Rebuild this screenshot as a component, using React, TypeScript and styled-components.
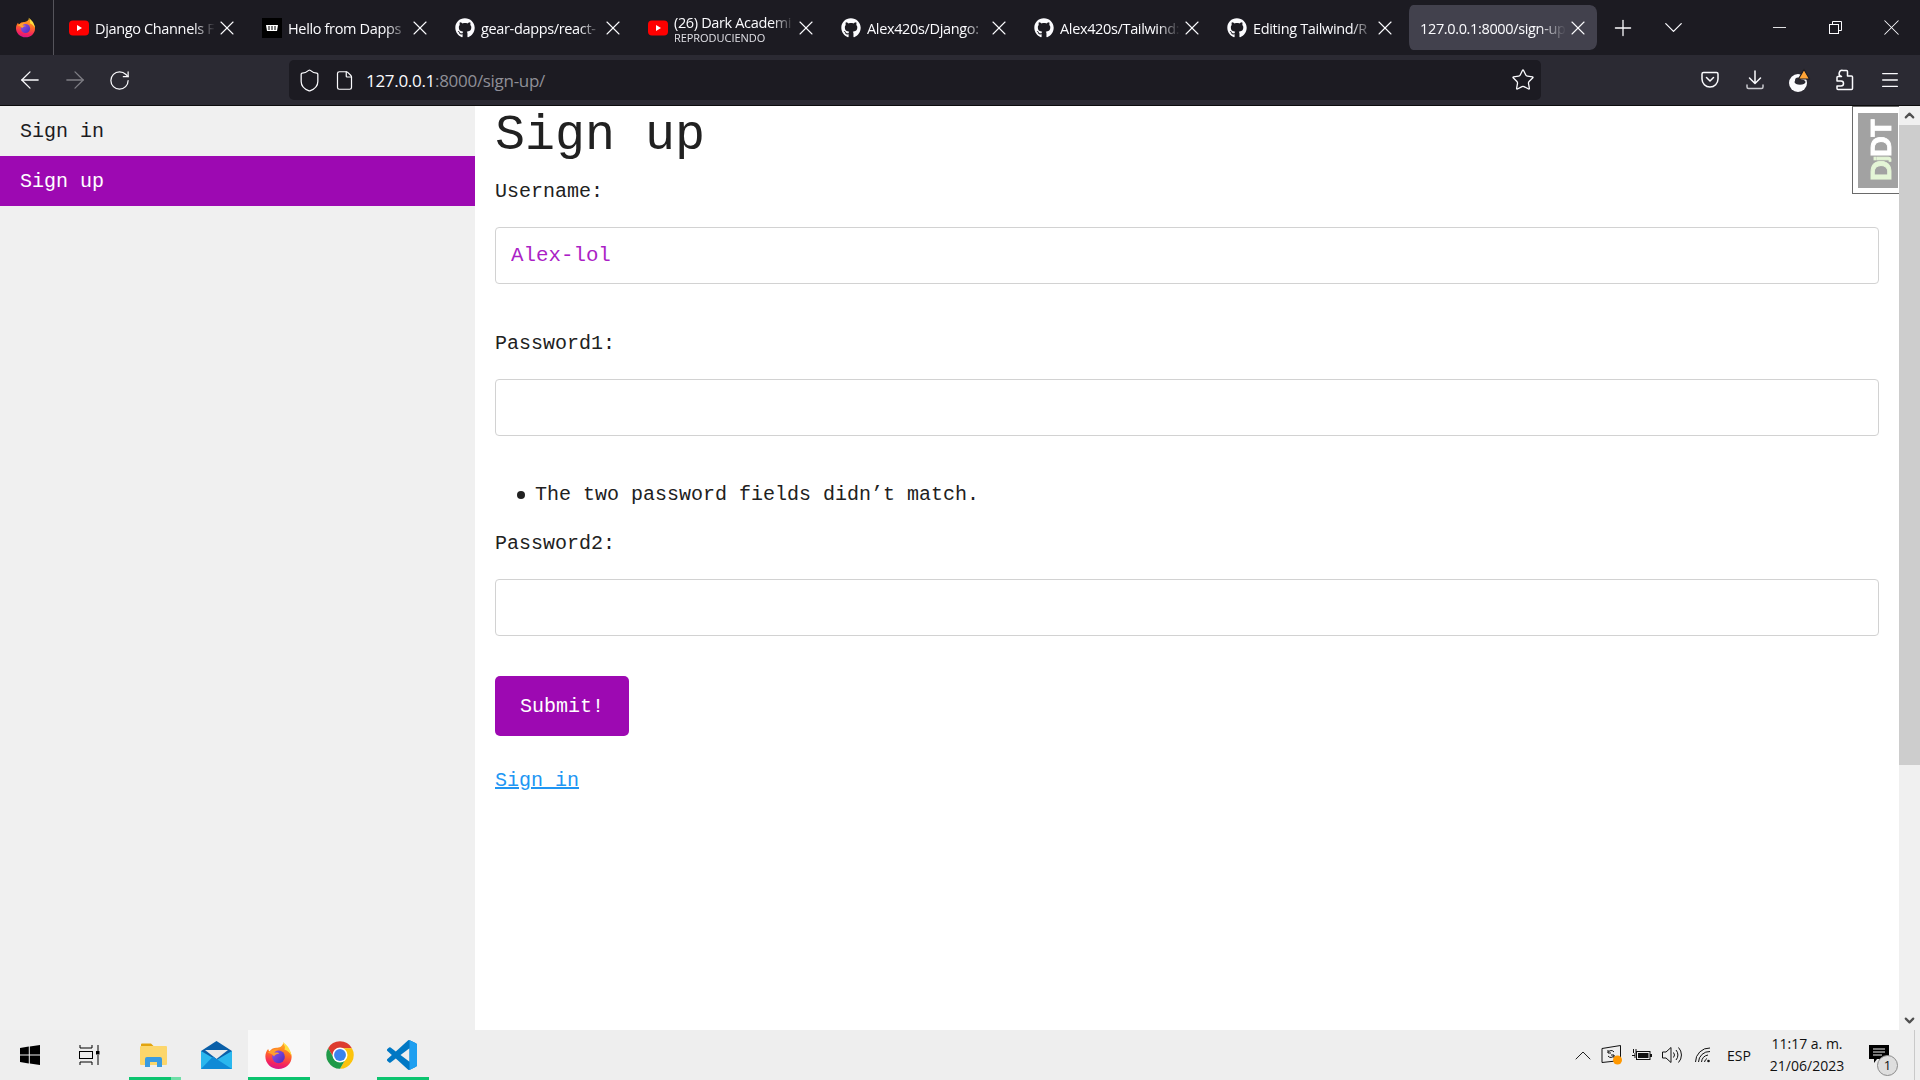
import * as React from "react";
import styled, { createGlobalStyle } from "styled-components";
import { FaGithub } from "react-icons/fa";
import {
  ArrowLeft,
  ArrowRight,
  ChevronDown,
  ChevronUp,
  File,
  Menu,
  Minus,
  Plus,
  RotateCw,
  Shield,
  Star,
  X,
} from "lucide-react";

const GlobalStyle = createGlobalStyle`
  html, body {
    margin: 0;
    padding: 0;
    height: 100%;
    overflow: hidden;
  }
  * {
    box-sizing: border-box;
  }
`;

const UI_FONT = `"Open Sans", "Noto Sans", sans-serif`;
const MONO_FONT = `"Liberation Mono", monospace`;

const Screen = styled.div`
  width: 1920px;
  height: 1080px;
  display: flex;
  flex-direction: column;
  overflow: hidden;
  background: #fff;
`;

/* browser chrome */

const TabStrip = styled.div`
  height: 55px;
  display: flex;
  align-items: stretch;
  background: #1c1b22;
  color: #fbfbfe;
  font-family: ${UI_FONT};
`;

const FirefoxMenu = styled.div`
  width: 54px;
  border-right: 1px solid #55545b;
  display: flex;
  align-items: center;
  justify-content: center;
  padding: 0 3px 1px 0;
`;

const Tab = styled.div<{ $active?: boolean }>`
  width: 193px;
  height: 45px;
  margin-top: 5px;
  padding-left: 11px;
  border: 0 solid transparent;
  border-width: 0 1px 0 4px;
  border-radius: 8px;
  background: ${(p) => (p.$active ? "#42414d" : "transparent")};
  background-clip: padding-box;
  display: flex;
  align-items: center;
  gap: 6px;
`;

const Favicon = styled.span`
  width: 20px;
  height: 20px;
  flex: none;
  display: flex;
  align-items: center;
  justify-content: center;
`;

const TabLabel = styled.div`
  flex: 1;
  min-width: 0;
  overflow: hidden;
  white-space: nowrap;
  mask-image: linear-gradient(to right, #000 82%, transparent 100%);
`;

const TabTitle = styled.div`
  font-size: 14.5px;
  line-height: 18px;
  letter-spacing: -0.35px;
  padding-top: 2px;
`;

const TabSub = styled.div`
  font-size: 11px;
  line-height: 12px;
  letter-spacing: -0.05px;
  color: #e0e0e6;
`;

const TabClose = styled.span`
  width: 24px;
  flex: none;
  margin: 0 7px 0 -6px;
  display: flex;
  justify-content: center;
`;

const StripButton = styled.div<{ $w: number }>`
  width: ${(p) => p.$w}px;
  display: flex;
  align-items: center;
  justify-content: center;
`;

const WindowControls = styled.div`
  margin-left: auto;
  margin-right: 1px;
  display: flex;
`;

const Toolbar = styled.div`
  height: 50px;
  display: flex;
  align-items: center;
  padding: 0 8px 0 7px;
  background: #2b2a33;
  color: #fbfbfe;
`;

const ToolButton = styled.div<{ $dim?: boolean }>`
  width: 45px;
  height: 40px;
  display: flex;
  align-items: center;
  justify-content: center;
  opacity: ${(p) => (p.$dim ? 0.4 : 1)};
`;

const UrlBar = styled.div`
  flex: 1;
  height: 40px;
  margin: 0 146px 0 147px;
  padding: 0 6px 0 7px;
  display: flex;
  align-items: center;
  background: #1c1b22;
  border-radius: 5px;
`;

const UrlIcon = styled.span<{ $w: number }>`
  width: ${(p) => p.$w}px;
  flex: none;
  display: flex;
  justify-content: center;
`;

const UrlText = styled.div`
  flex: 1;
  padding-top: 1px;
  font-family: ${UI_FONT};
  font-size: 17px;
  letter-spacing: -0.3px;
  color: #fbfbfe;
`;

const UrlRest = styled.span`
  color: #8f8f97;
`;

const ChromeEdge = styled.div`
  height: 1px;
  background: #0c0c0d;
`;

/* page */

const PageArea = styled.div`
  position: relative;
  flex: 1;
  min-height: 0;
  display: flex;
`;

const SideNav = styled.nav`
  width: 475px;
  flex: none;
  background: #f0f0f0;
`;

const SideLink = styled.a<{ $active?: boolean }>`
  display: block;
  height: 50px;
  padding: 0 20px;
  font: 20px/51px ${MONO_FONT};
  color: ${(p) => (p.$active ? "#fff" : "#1c1b22")};
  background: ${(p) => (p.$active ? "#9d09b2" : "transparent")};
`;

const Main = styled.main`
  flex: 1;
  min-width: 0;
  padding: 0 20px;
  font-family: ${MONO_FONT};
  color: #212121;
`;

const Heading = styled.h1`
  margin: 0 0 17px;
  padding-top: 3px;
  font-size: 50px;
  line-height: 54px;
  font-weight: 400;
`;

const FieldLabel = styled.label`
  display: block;
  font-size: 20px;
  line-height: 24px;
`;

const TextInput = styled.input`
  display: block;
  width: 100%;
  height: 57px;
  margin-top: 23px;
  margin-bottom: 48px;
  padding: 0 15px;
  border: 1.5px solid #d2d2d2;
  border-radius: 4px;
  outline: none;
  background: #fff;
  font-family: ${MONO_FONT};
  font-size: 20.8px;
  color: #ab1fc6;
`;

const ErrorList = styled.ul`
  margin: -1px 0 25px;
  padding-left: 40px;
  list-style: none;
  font-size: 20px;
  line-height: 24px;
`;

const ErrorItem = styled.li`
  position: relative;

  &::before {
    content: "";
    position: absolute;
    left: -18px;
    top: 8px;
    width: 8px;
    height: 8px;
    border-radius: 50%;
    background: #212121;
  }
`;

const SubmitButton = styled.button`
  display: block;
  width: 134px;
  height: 60px;
  margin-top: -8px;
  padding: 0;
  border: none;
  border-radius: 5px;
  background: #9d09b2;
  color: #fff;
  font-family: ${MONO_FONT};
  font-size: 20px;
`;

const TextLink = styled.a`
  display: inline-block;
  margin-top: 33px;
  font-size: 20px;
  line-height: 24px;
  color: #2196f3;
  text-decoration: underline;
`;

const ScrollBar = styled.div`
  width: 21px;
  flex: none;
  display: flex;
  flex-direction: column;
  background: #f0f0f0;
  color: #505050;
`;

const ScrollArrow = styled.div`
  height: 19px;
  flex: none;
  display: flex;
  align-items: center;
  justify-content: center;
`;

const ScrollThumb = styled.div`
  height: 640px;
  flex: none;
  background: #cdcdcd;
`;

const ScrollTrack = styled.div`
  flex: 1;
`;

const DebugHandle = styled.div`
  position: absolute;
  top: 0;
  right: 21px;
  width: 47px;
  height: 88px;
  padding: 6px 0 5px 5px;
  background: #fff;
  border: 1px solid #6a6a6a;
  border-right: none;
`;

const DebugBadge = styled.div`
  height: 100%;
  padding-right: 7px;
  background: #a2a2a2;
  display: flex;
  align-items: center;
  justify-content: center;
  writing-mode: vertical-rl;
  transform: rotate(180deg);
  font-family: "Liberation Sans", sans-serif;
  font-weight: 700;
  font-size: 29px;
  letter-spacing: -1px;
  -webkit-text-stroke: 0.8px currentColor;
  color: #fff;
`;

const DebugDj = styled.span`
  color: #e4f5d6;

  & small {
    font-size: 18px;
  }
`;

/* taskbar */

const Taskbar = styled.footer`
  height: 50px;
  display: flex;
  align-items: stretch;
  background: #eeeeee;
  font-family: ${UI_FONT};
  color: #111;
`;

const TaskSlot = styled.div<{ $active?: boolean; $bar?: "full" | "stack"; $nudge?: number }>`
  position: relative;
  width: 62px;
  padding-right: ${(p) => p.$nudge ?? 2}px;
  display: flex;
  align-items: center;
  justify-content: center;
  background: ${(p) => (p.$active ? "#f8f8f8" : "transparent")};

  &::after {
    content: "";
    display: ${(p) => (p.$bar ? "block" : "none")};
    position: absolute;
    bottom: 0;
    left: ${(p) => (p.$active ? 0 : 5)}px;
    right: ${(p) => (p.$active ? 0 : 5)}px;
    height: 3px;
    background: ${(p) =>
      p.$bar === "stack"
        ? "linear-gradient(to right, #0cc46f 80%, #6fdfa8 80%)"
        : "#0cc46f"};
  }
`;

const Tray = styled.div`
  margin-left: auto;
  padding-right: 5px;
  display: flex;
  align-items: center;
`;

const TrayIcon = styled.span<{ $w: number }>`
  width: ${(p) => p.$w}px;
  height: 50px;
  flex: none;
  display: flex;
  align-items: center;
  justify-content: center;
`;

const TrayLang = styled.span`
  width: 40px;
  text-align: center;
  font-size: 14px;
`;

const Clock = styled.div`
  width: 98px;
  padding-right: 2px;
  text-align: center;
  font-size: 14px;
  line-height: 22px;
  white-space: nowrap;
`;

const NoticeWrap = styled.div`
  position: relative;
  width: 58px;
  height: 50px;
  padding: 15px 0 0 12px;
  border-right: 1px solid #c9c9c9;
`;

const NoticeCount = styled.span`
  position: absolute;
  left: 20px;
  top: 25px;
  width: 21px;
  height: 21px;
  border-radius: 50%;
  background: #dedede;
  border: 1.5px solid #8a8a8a;
  font-size: 13px;
  line-height: 18px;
  text-align: center;
`;

/* drawn icons */

const FirefoxIcon: React.FC<{ size: number; id: string }> = ({ size, id }) => (
  <svg width={size} height={size} viewBox="0 0 32 32">
    <defs>
      <linearGradient id={`${id}Body`} x1="0.6" y1="0" x2="0.4" y2="1">
        <stop offset="0" stopColor="#ffb51f" />
        <stop offset="0.45" stopColor="#ff6a26" />
        <stop offset="0.8" stopColor="#f5235f" />
        <stop offset="1" stopColor="#d3158d" />
      </linearGradient>
      <linearGradient id={`${id}Core`} x1="0" y1="0" x2="1" y2="1">
        <stop offset="0" stopColor="#8f55f0" />
        <stop offset="1" stopColor="#4d2ab8" />
      </linearGradient>
    </defs>
    <path
      d="M21 1c.6 3 2.600 4.600 4.600 6.600C28.900 11 30.500 14 30.500 17.500 30.500 25.500 24 31 16 31 8 31 1.500 25 1.500 17.200 1.500 14 2.600 11 4.600 8.800c.2 1.300.8 2.200 1.600 2.800C8 8.500 11 7.500 13.500 7.500 16 7.500 21.800 6 21 1z"
      fill={`url(#${id}Body)`}
    />
    <path
      d="M21 1c2.800 2.500 8.500 6.500 9.500 16-1.800-4-4.500-6.500-8-7.500C24 7 22.500 4 21 1z"
      fill="#ffdf3e"
    />
    <circle cx="16" cy="17.500" r="7" fill={`url(#${id}Core)`} />
    <path
      d="M4 13c2.500-3 8-5 13-3.500-3 .3-5 1.800-5.500 3.800 2-.9 4.400-.6 5.400.7-2.600-.2-4.800.8-5.800 3C9.500 15 7 13.500 4 13z"
      fill="#ffa02e"
    />
  </svg>
);

const YoutubeIcon = () => (
  <svg width="20" height="20" viewBox="0 0 20 20">
    <rect x="0" y="2.500" width="20" height="15" rx="4" fill="#f00" />
    <polygon points="8,7 8,13 13,10" fill="#fff" />
  </svg>
);

const DappsIcon = () => (
  <svg width="20" height="20" viewBox="0 0 20 20">
    <rect width="20" height="20" fill="#000" />
    <path d="M4 7h12l-1 6H5z" fill="#fff" />
    <path d="M7 8v4M10 8v4M13 8v4" stroke="#000" strokeWidth="1" />
  </svg>
);

const RestoreIcon = () => (
  <svg width="13" height="13" viewBox="0 0 13 13" fill="none" stroke="#fbfbfe" strokeWidth="1">
    <rect x="0.500" y="3.500" width="9" height="9" />
    <path d="M3.500 3.500v-3h9v9h-3" />
  </svg>
);

const PocketIcon = () => (
  <svg width="20" height="20" viewBox="0 0 20 20" fill="none" stroke="#fbfbfe" strokeWidth="1.500">
    <path d="M3.500 2.500h13a1.500 1.500 0 0 1 1.500 1.500v5a8 8 0 0 1-16 0V4a1.500 1.500 0 0 1 1.500-1.500z" />
    <path d="M6.500 7.500 10 11l3.500-3.500" strokeLinecap="round" strokeLinejoin="round" />
  </svg>
);

const DownloadIcon = () => (
  <svg width="20" height="20" viewBox="0 0 20 20" fill="none" stroke="#fbfbfe" strokeWidth="1.500" strokeLinecap="round" strokeLinejoin="round">
    <path d="M10 1v12M4.500 8 10 13.500 15.500 8" />
    <path d="M2 15v2a1.500 1.500 0 0 0 1.500 1.500h13A1.500 1.500 0 0 0 18 17v-2" stroke="#c9c9cf" />
  </svg>
);

const AccountIcon = () => (
  <svg width="24" height="26" viewBox="0 0 24 26">
    <circle cx="10" cy="16" r="9" fill="#fbfbfe" />
    <ellipse cx="12" cy="15" rx="5.500" ry="2.800" fill="#2b2a33" />
    <circle cx="10" cy="13.500" r="3" fill="#2b2a33" />
    <path d="M16 2.500 21.500 12H10.500z" fill="#ffa436" stroke="#1c1b22" strokeWidth="1.200" strokeLinejoin="round" />
  </svg>
);

const PuzzleIcon = () => (
  <svg width="20" height="22" viewBox="0 0 20 22" fill="none" stroke="#fbfbfe" strokeWidth="1.500" strokeLinejoin="round">
    <path d="M8 1.500h3.500a1 1 0 0 1 1 1v4.500H16.500a1 1 0 0 1 1 1V19.500a1 1 0 0 1-1 1H3a1 1 0 0 1-1-1v-2.500h4a2.500 2.500 0 0 0 0-5H2V8.500a1 1 0 0 1 1-1h3.500A2.500 2.500 0 0 1 8 1.500z" />
  </svg>
);

const WindowsLogo = () => (
  <svg width="20" height="20" viewBox="0 0 20 20" fill="#000">
    <polygon points="0,2.900 8.800,1.600 8.800,9.500 0,9.500" />
    <polygon points="9.800,1.400 20,0 20,9.500 9.800,9.500" />
    <polygon points="0,10.500 8.800,10.500 8.800,18.400 0,17.100" />
    <polygon points="9.800,10.500 20,10.500 20,20 9.800,18.600" />
  </svg>
);

const TaskViewIcon = () => (
  <svg width="21" height="20" viewBox="0 0 21 20" fill="none" stroke="#000" strokeWidth="1">
    <path d="M1 0v3h12V0M1 20v-3h12v3" />
    <rect x="0.500" y="6.500" width="13" height="7" />
    <path d="M19 0v6M19 10v10" />
    <rect x="17" y="6" width="3.500" height="3.500" fill="#000" stroke="none" />
  </svg>
);

const ExplorerIcon = () => (
  <svg width="28" height="24" viewBox="0 0 28 24">
    <path d="M1 1.500a1 1 0 0 1 1-1h9l3 3H1z" fill="#e2a40e" />
    <rect x="0" y="3" width="27" height="19" rx="1" fill="#fcd66b" />
    <path d="M5 16a2 2 0 0 1 2-2h13a2 2 0 0 1 2 2v8h-5v-5h-7v5H5z" fill="#3a9be0" />
  </svg>
);

const MailIcon = () => (
  <svg width="31" height="29" viewBox="0 0 31 29">
    <polygon points="0,10 15.500,0 31,10 31,28 0,28" fill="#0a5fa8" />
    <polygon points="4,9 27,9 15.500,18" fill="#e9e9e9" />
    <polygon points="0,10 15.500,19 31,10 31,28 0,28" fill="#2ab7ee" />
    <polygon points="0,28 12,15.500 15.500,18 31,28" fill="#0f8ad6" />
  </svg>
);

const ChromeIcon = () => (
  <svg width="30" height="30" viewBox="0 0 48 48">
    <path d="M24 2a22 22 0 0 1 19.050 11H24a11 11 0 0 0-9.500 16.500L4.950 13A22 22 0 0 1 24 2z" fill="#dd3b2e" />
    <path d="M43.050 13A22 22 0 0 1 24 46l9.500-16.500A11 11 0 0 0 24 13z" fill="#fcc30b" />
    <path d="M24 46A22 22 0 0 1 4.950 13L14.500 29.500a11 11 0 0 0 19 0z" fill="#1f9a49" />
    <circle cx="24" cy="24" r="12" fill="#fff" />
    <circle cx="24" cy="24" r="9.500" fill="#3b82ee" />
  </svg>
);

const VscodeIcon = () => (
  <svg width="30" height="30" viewBox="0 0 24 24">
    <path
      d="M23.150 2.587 18.210.21a1.494 1.494 0 0 0-1.705.29l-9.460 8.630-4.120-3.128a.999.999 0 0 0-1.276.057L.327 7.261A1 1 0 0 0 .326 8.740L3.899 12 .326 15.260a1 1 0 0 0 .001 1.479L1.650 17.940a.999.999 0 0 0 1.276.057l4.120-3.128 9.460 8.630a1.492 1.492 0 0 0 1.704.29l4.942-2.377A1.500 1.500 0 0 0 24 20.060V3.939a1.500 1.500 0 0 0-.850-1.352zm-5.146 14.861L10.826 12l7.178-5.448v10.896z"
      fill="#0078c4"
    />
    <path
      d="M18 .1 23.150 2.587A1.500 1.500 0 0 1 24 3.939V20.060a1.500 1.500 0 0 1-.850 1.352L18 23.900z"
      fill="#1f9ff0"
    />
  </svg>
);

const SecurityIcon = () => (
  <svg width="22" height="20" viewBox="0 0 22 20" fill="none" stroke="#111" strokeWidth="1">
    <path d="M1 3.500 19.500.5v15L1 17.500z" />
    <path d="M13 7a3.500 3.500 0 0 0-6 .5M7 11a3.500 3.500 0 0 0 6-.5M7 5v3h3M13 13v-3h-3" />
    <circle cx="16.500" cy="15" r="4.500" fill="#ff9800" stroke="none" />
  </svg>
);

const BatteryIcon = () => (
  <svg width="20" height="14" viewBox="0 0 20 14" fill="none" stroke="#111" strokeWidth="1">
    <rect x="4.500" y="3.500" width="13.500" height="8" />
    <rect x="6" y="5" width="10.500" height="5" fill="#111" stroke="none" />
    <rect x="18" y="6" width="2" height="3" fill="#111" stroke="none" />
    <path d="M0 7.500h3M3 5v5M1.500 5V1M4 5V1" />
  </svg>
);

const VolumeIcon = () => (
  <svg width="21" height="18" viewBox="0 0 21 18" fill="none" stroke="#111" strokeWidth="1">
    <path d="M.5 6h3.500L9 1.500v15L4 12H.5z" />
    <path d="M11.500 6.500a4 4 0 0 1 0 5M14 4a7.500 7.500 0 0 1 0 10M16.500 1.500a11 11 0 0 1 0 15" />
  </svg>
);

const WifiIcon = () => (
  <svg width="16" height="16" viewBox="0 0 16 16" fill="none" stroke="#111" strokeWidth="1">
    <path d="M.5 15A14 14 0 0 1 15 1M3.500 15A11 11 0 0 1 15 4.500M6.500 15A8 8 0 0 1 13 8M9.500 15A5 5 0 0 1 12 11.500" />
    <circle cx="13.500" cy="14" r="1.300" fill="#111" stroke="none" />
  </svg>
);

const NoticeIcon = () => (
  <svg width="20" height="18" viewBox="0 0 20 18">
    <path d="M0 0h20v14H8l-3 4v-4H0z" fill="#000" />
    <path d="M4 4h12M4 7h12M4 10h9" stroke="#eee" strokeWidth="1" />
  </svg>
);

type TabInfo = { icon: React.ReactNode; title: string; sub?: string };

const gh = <FaGithub size={20} color="#fbfbfe" />;

const tabs: TabInfo[] = [
  { icon: <YoutubeIcon />, title: "Django Channels F" },
  { icon: <DappsIcon />, title: "Hello from Dapps" },
  { icon: gh, title: "gear-dapps/react-" },
  { icon: <YoutubeIcon />, title: "(26) Dark Academi", sub: "REPRODUCIENDO" },
  { icon: gh, title: "Alex420s/Django:" },
  { icon: gh, title: "Alex420s/Tailwind:" },
  { icon: gh, title: "Editing Tailwind/R" },
];

export default function App() {
  return (
    <Screen>
      <GlobalStyle />
      <TabStrip>
        <FirefoxMenu>
          <FirefoxIcon size={21} id="ffTab" />
        </FirefoxMenu>
        {tabs.map((t) => (
          <Tab key={t.title}>
            <Favicon>{t.icon}</Favicon>
            <TabLabel>
              <TabTitle>{t.title}</TabTitle>
              {t.sub && <TabSub>{t.sub}</TabSub>}
            </TabLabel>
            <TabClose>
              <X size={24} strokeWidth={1.1} />
            </TabClose>
          </Tab>
        ))}
        <Tab $active>
          <TabLabel>
            <TabTitle>127.0.0.1:8000/sign-up/</TabTitle>
          </TabLabel>
          <TabClose>
            <X size={24} strokeWidth={1.1} />
          </TabClose>
        </Tab>
        <StripButton $w={50}>
          <Plus size={26} strokeWidth={1.2} />
        </StripButton>
        <StripButton $w={50}>
          <ChevronDown size={31} strokeWidth={1} />
        </StripButton>
        <WindowControls>
          <StripButton $w={56}>
            <Minus size={21} strokeWidth={1} />
          </StripButton>
          <StripButton $w={56}>
            <RestoreIcon />
          </StripButton>
          <StripButton $w={56}>
            <X size={27} strokeWidth={0.9} />
          </StripButton>
        </WindowControls>
      </TabStrip>

      <Toolbar>
        <ToolButton>
          <ArrowLeft size={28} strokeWidth={1.1} />
        </ToolButton>
        <ToolButton $dim>
          <ArrowRight size={28} strokeWidth={1.1} />
        </ToolButton>
        <ToolButton>
          <RotateCw size={23} strokeWidth={1.3} />
        </ToolButton>
        <UrlBar>
          <UrlIcon $w={26}>
            <Shield size={25} strokeWidth={1.2} color="#fbfbfe" />
          </UrlIcon>
          <UrlIcon $w={44}>
            <File size={21} strokeWidth={1.4} color="#fbfbfe" />
          </UrlIcon>
          <UrlText>
            127.0.0.1<UrlRest>:8000/sign-up/</UrlRest>
          </UrlText>
          <UrlIcon $w={24}>
            <Star size={24} strokeWidth={1.3} color="#fbfbfe" />
          </UrlIcon>
        </UrlBar>
        <ToolButton>
          <PocketIcon />
        </ToolButton>
        <ToolButton>
          <DownloadIcon />
        </ToolButton>
        <ToolButton>
          <AccountIcon />
        </ToolButton>
        <ToolButton>
          <PuzzleIcon />
        </ToolButton>
        <ToolButton>
          <Menu size={22} strokeWidth={1.4} />
        </ToolButton>
      </Toolbar>
      <ChromeEdge />

      <PageArea>
        <SideNav>
          <SideLink>Sign in</SideLink>
          <SideLink $active>Sign up</SideLink>
        </SideNav>
        <Main>
          <Heading>Sign up</Heading>
          <FieldLabel>Username:</FieldLabel>
          <TextInput defaultValue="Alex-lol" />
          <FieldLabel>Password1:</FieldLabel>
          <TextInput />
          <ErrorList>
            <ErrorItem>The two password fields didn’t match.</ErrorItem>
          </ErrorList>
          <FieldLabel>Password2:</FieldLabel>
          <TextInput />
          <SubmitButton>Submit!</SubmitButton>
          <TextLink>Sign in</TextLink>
        </Main>
        <ScrollBar>
          <ScrollArrow>
            <ChevronUp size={15} strokeWidth={3.5} />
          </ScrollArrow>
          <ScrollThumb />
          <ScrollTrack />
          <ScrollArrow>
            <ChevronDown size={15} strokeWidth={3.5} />
          </ScrollArrow>
        </ScrollBar>
        <DebugHandle>
          <DebugBadge>
            <span>
              <DebugDj>
                D<small>j</small>
              </DebugDj>
              DT
            </span>
          </DebugBadge>
        </DebugHandle>
      </PageArea>

      <Taskbar>
        <TaskSlot>
          <WindowsLogo />
        </TaskSlot>
        <TaskSlot $nudge={7}>
          <TaskViewIcon />
        </TaskSlot>
        <TaskSlot $bar="stack">
          <ExplorerIcon />
        </TaskSlot>
        <TaskSlot>
          <MailIcon />
        </TaskSlot>
        <TaskSlot $active $bar="full">
          <FirefoxIcon size={29} id="ffTask" />
        </TaskSlot>
        <TaskSlot>
          <ChromeIcon />
        </TaskSlot>
        <TaskSlot $bar="full">
          <VscodeIcon />
        </TaskSlot>
        <Tray>
          <TrayIcon $w={28}>
            <ChevronUp size={31} strokeWidth={0.8} />
          </TrayIcon>
          <TrayIcon $w={30}>
            <SecurityIcon />
          </TrayIcon>
          <TrayIcon $w={30}>
            <BatteryIcon />
          </TrayIcon>
          <TrayIcon $w={30}>
            <VolumeIcon />
          </TrayIcon>
          <TrayIcon $w={32}>
            <WifiIcon />
          </TrayIcon>
          <TrayLang>ESP</TrayLang>
          <Clock>
            <div>11:17 a. m.</div>
            <div>21/06/2023</div>
          </Clock>
          <NoticeWrap>
            <NoticeIcon />
            <NoticeCount>1</NoticeCount>
          </NoticeWrap>
        </Tray>
      </Taskbar>
    </Screen>
  );
}
